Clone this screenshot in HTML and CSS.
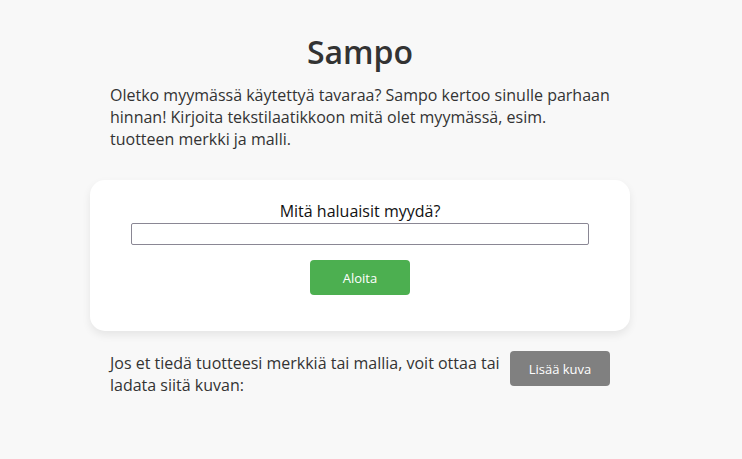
FILE: index.html
```html
<!DOCTYPE html>
<html lang="fi">
<head>
<meta charset="utf-8">
<title>Sampo</title>
<link rel="stylesheet" href="styles.css">
</head>
<body>
<main class="page">
  <h1 class="title">Sampo</h1>
  <p class="intro">Oletko myymässä käytettyä tavaraa? Sampo kertoo sinulle parhaan hinnan! Kirjoita tekstilaatikkoon mitä olet myymässä, esim. tuotteen merkki ja malli.</p>
  <section class="card">
    <label class="label" for="q">Mitä haluaisit myydä?</label>
    <input class="field" id="q" type="text">
    <button class="btn btn-green" type="button">Aloita</button>
  </section>
  <div class="photo-row">
    <p class="photo-text">Jos et tiedä tuotteesi merkkiä tai mallia, voit ottaa tai ladata siitä kuvan:</p>
    <button class="btn btn-gray" type="button">Lisää kuva</button>
  </div>
</main>
</body>
</html>
```
FILE: styles.css
```css
html, body {
  margin: 0;
  padding: 0;
  background: #f8f8f8;
}
body {
  font-family: "Open Sans", "Liberation Sans", sans-serif;
  color: #333333;
}
.page {
  width: 540px;
  margin-left: 90px;
  padding-top: 30px;
}
.title {
  margin: 0;
  text-align: center;
  font-size: 32px;
  font-weight: 600;
  line-height: 44px;
  color: #333333;
}
.intro {
  margin: 10px 0 0;
  padding: 0 20px;
  font-size: 16px;
  line-height: 22px;
}
.card {
  margin-top: 30px;
  background: #ffffff;
  border-radius: 15px;
  box-shadow: 0 4px 8px rgba(0, 0, 0, 0.08);
  padding: 20px 0 36px;
  display: flex;
  flex-direction: column;
  align-items: center;
}
.label {
  font-size: 16px;
  line-height: 22px;
  color: #111111;
}
.field {
  box-sizing: border-box;
  width: 458px;
  height: 22px;
  margin: 1px 0 0;
  border: 1px solid #8a8794;
  border-radius: 2px;
  background: #ffffff;
  padding: 0 4px;
}
.btn {
  border: none;
  border-radius: 4px;
  width: 100px;
  height: 35px;
  color: #ffffff;
  font-family: "Open Sans", "Liberation Sans", sans-serif;
  font-size: 13px;
  padding: 0;
}
.btn-green {
  margin-top: 15px;
  background: #4caf50;
}
.btn-gray {
  background: #808080;
  flex: none;
  margin-top: -1px;
}
.photo-row {
  display: flex;
  align-items: flex-start;
  gap: 10px;
  padding: 0 20px;
  margin-top: 21px;
}
.photo-text {
  margin: 0;
  flex: 1;
  font-size: 16px;
  line-height: 22px;
}
```
